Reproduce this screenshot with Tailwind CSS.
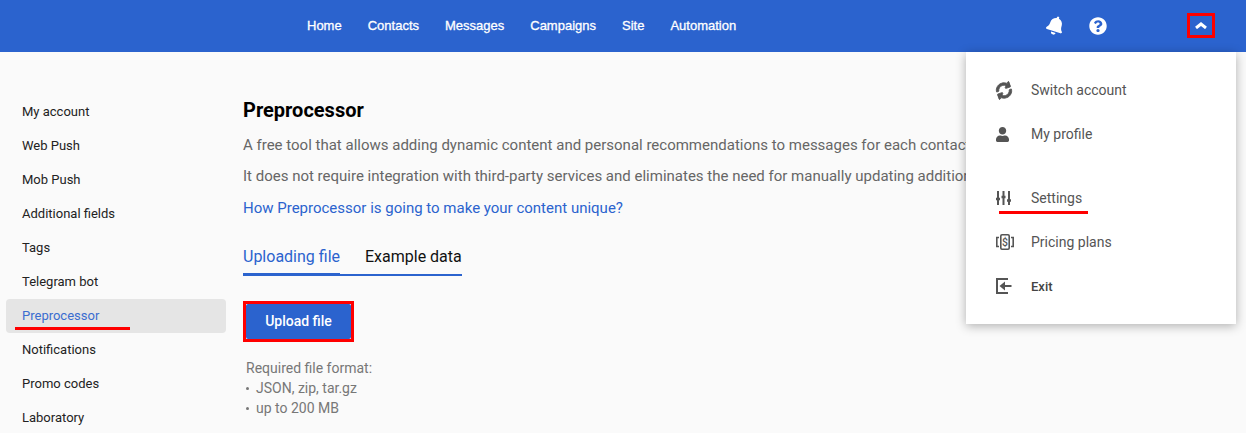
<!DOCTYPE html>
<html lang="en">
<head>
    <meta charset="UTF-8">
    <title>Preprocessor</title>
    <script src="https://cdn.jsdelivr.net/npm/@tailwindcss/browser@4"></script>
</head>
<body class="bg-[#fafafa] font-[Roboto,sans-serif] h-[433px] overflow-hidden relative">

    <header class="h-[52px] bg-[#2b63ce] flex items-center relative text-white">
        <nav class="flex gap-[26px] pl-[307px] text-[13px] font-['Liberation_Sans',sans-serif] [-webkit-text-stroke:0.3px_white] -mt-[1px]">
            <a>Home</a>
            <a>Contacts</a>
            <a>Messages</a>
            <a>Campaigns</a>
            <a>Site</a>
            <a>Automation</a>
        </nav>
        <div class="ml-auto flex items-center pr-[31px]">
            <svg class="w-[17px] h-[19px] rotate-[18deg] fill-white mr-[25px] -mt-[2px]" viewBox="0 0 448 512"><path d="M224 512c35.32 0 63.97-28.65 63.97-64H160.03c0 35.35 28.65 64 63.97 64zm215.39-149.71c-19.32-20.76-55.47-51.99-55.47-154.29 0-77.7-54.48-139.9-127.94-155.16V32c0-17.67-14.32-32-31.98-32s-31.98 14.33-31.98 32v20.84C118.56 68.1 64.08 130.3 64.08 208c0 102.3-36.15 133.53-55.47 154.29-6 6.45-8.66 14.16-8.61 21.71.11 16.4 12.98 32 32.1 32h383.8c19.12 0 32-15.6 32.1-32 .05-7.55-2.61-15.27-8.61-21.71z"/></svg>
            <svg class="w-[18px] h-[18px] fill-white mr-[80px]" viewBox="0 0 512 512"><path d="M504 256c0 136.997-111.043 248-248 248S8 392.997 8 256C8 119.083 119.043 8 256 8s248 111.083 248 248zM262.655 90c-54.497 0-89.255 22.957-116.549 63.758-3.536 5.286-2.353 12.415 2.715 16.258l34.699 26.31c5.205 3.947 12.621 3.008 16.665-2.122 17.864-22.658 30.113-35.797 57.303-35.797 20.429 0 45.698 13.148 45.698 32.958 0 14.976-12.363 22.667-32.534 33.976C247.128 238.528 216 254.941 216 296v4c0 6.627 5.373 12 12 12h56c6.627 0 12-5.373 12-12v-1.333c0-28.462 83.186-29.647 83.186-106.667 0-58.002-60.165-102-116.531-102zM256 338c-25.365 0-46 20.635-46 46 0 25.364 20.635 46 46 46s46-20.636 46-46c0-25.365-20.635-46-46-46z"/></svg>
            <div class="w-[28px] h-[25px] border-[3px] border-[#ff0000] flex items-center justify-center -mt-[1px]">
                <svg class="w-[12px] h-[7px]" viewBox="0 0 12 7" fill="none" stroke="white" stroke-width="3"><path d="M1 6l5-4L11 6"/></svg>
            </div>
        </div>
    </header>

    <div class="flex">
        <aside class="w-[243px] shrink-0 pl-[6px] pt-[43px] text-[13px] text-[#222]">
            <ul class="w-[220px]">
                <li class="h-[34px] pl-[16px] flex items-center">My account</li>
                <li class="h-[34px] pl-[16px] flex items-center">Web Push</li>
                <li class="h-[34px] pl-[16px] flex items-center">Mob Push</li>
                <li class="h-[34px] pl-[16px] flex items-center">Additional fields</li>
                <li class="h-[34px] pl-[16px] flex items-center">Tags</li>
                <li class="h-[34px] pl-[16px] flex items-center">Telegram bot</li>
                <li class="h-[34px] pl-[16px] flex items-center bg-[#e5e5e5] rounded-[4px] text-[#3a6dd0] relative">
                    Preprocessor
                    <span class="absolute left-[9px] top-[28px] w-[115px] h-[3px] bg-[#ff0000]"></span>
                </li>
                <li class="h-[34px] pl-[16px] flex items-center">Notifications</li>
                <li class="h-[34px] pl-[16px] flex items-center">Promo codes</li>
                <li class="h-[34px] pl-[16px] flex items-center">Laboratory</li>
            </ul>
        </aside>

        <main class="pt-[45px] whitespace-nowrap">
            <h1 class="text-[20px] leading-[26px] font-bold text-black">Preprocessor</h1>
            <p class="text-[15px] leading-[20px] text-[#666] mt-[12px]">A free tool that allows adding dynamic content and personal recommendations to messages for each contact</p>
            <p class="text-[15px] leading-[20px] text-[#666] mt-[11px]">It does not require integration with third-party services and eliminates the need for manually updating additional data</p>
            <p class="text-[15px] leading-[20px] text-[#2b63ce] mt-[12px]">How Preprocessor is going to make your content unique?</p>

            <div class="flex w-[219px] mt-[25px] border-b-2 border-[#2b63ce] text-[16px] h-[33px]">
                <div class="w-[97px] text-[#2b63ce] border-b-[3px] border-[#2b63ce] h-[33px] leading-[28px]">Uploading file</div>
                <div class="pl-[25px] text-[#111] leading-[28px]">Example data</div>
            </div>

            <div class="w-[111px] h-[41px] border-[3px] border-[#ff0000] mt-[25px]">
                <button class="w-full h-full bg-[#2b63ce] rounded-[2px] text-white text-[14px] font-medium">Upload file</button>
            </div>

            <div class="text-[14px] leading-[20px] text-[#777] pl-[3px] mt-[16px]">
                <div>Required file format:</div>
                <div class="flex items-center"><span class="w-[3px] h-[3px] rounded-full bg-[#777] mr-[7px]"></span>JSON, zip, tar.gz</div>
                <div class="flex items-center"><span class="w-[3px] h-[3px] rounded-full bg-[#777] mr-[7px]"></span>up to 200 MB</div>
            </div>
        </main>
    </div>

    <div class="absolute left-[966px] top-[52px] w-[270px] h-[272px] bg-white shadow-[0_2px_10px_rgba(0,0,0,0.3)] text-[14px] text-[#555] pt-[16px]">
        <div class="h-[44px] flex items-center pl-[30px]">
            <svg class="w-[16px] h-[17px] fill-[#555] stroke-[#555] stroke-[24] mr-[19px] rotate-[-20deg]" viewBox="0 0 512 512"><path d="M370.72 133.28C339.458 104.008 298.888 87.962 255.848 88c-77.458.068-144.328 53.178-162.791 126.85-1.344 5.363-6.122 9.15-11.651 9.15H24.103c-7.498 0-13.194-6.807-11.807-14.176C33.933 94.924 134.813 8 256 8c66.448 0 126.791 26.136 171.315 68.685L463.03 40.97C478.149 25.851 504 36.559 504 57.941V192c0 13.255-10.745 24-24 24H345.941c-21.382 0-32.09-25.851-16.971-40.971l41.75-41.749zM32 296h134.059c21.382 0 32.09 25.851 16.971 40.971l-41.75 41.75c31.262 29.273 71.835 45.319 114.876 45.28 77.418-.07 144.315-53.144 162.787-126.849 1.344-5.363 6.122-9.15 11.651-9.15h57.304c7.498 0 13.194 6.807 11.807 14.176C478.067 417.076 377.187 504 256 504c-66.448 0-126.791-26.136-171.315-68.685L48.97 471.03C33.851 486.149 8 475.441 8 454.059V320c0-13.255 10.745-24 24-24z"/></svg>
            <span>Switch account</span>
        </div>
        <div class="h-[44px] flex items-center pl-[30px]">
            <svg class="w-[13px] h-[15px] fill-[#555] mr-[22px]" viewBox="0 0 448 512"><path d="M224 256c70.7 0 128-57.3 128-128S294.7 0 224 0 96 57.3 96 128s57.3 128 128 128zm89.6 32h-16.7c-22.2 10.2-46.9 16-72.9 16s-50.6-5.8-72.9-16h-16.7C60.2 288 0 348.2 0 422.4V464c0 26.5 21.5 48 48 48h352c26.5 0 48-21.5 48-48v-41.6c0-74.2-60.2-134.4-134.4-134.4z"/></svg>
            <span>My profile</span>
        </div>
        <div class="h-[44px] flex items-center pl-[30px] mt-[20px] relative">
            <svg class="w-[15px] h-[14px] mr-[20px]" viewBox="0 0 15 14" fill="none" stroke="#555" stroke-width="2"><path d="M2 0v14M7.5 0v14M13 0v14"/><path d="M0 8h4M5.5 6h4M11 9.5h4" stroke-width="2.6"/></svg>
            <span>Settings</span>
            <span class="absolute left-[33px] top-[35px] w-[89px] h-[3px] bg-[#ff0000]"></span>
        </div>
        <div class="h-[44px] flex items-center pl-[30px]">
            <svg class="w-[18px] h-[16px] mr-[17px]" viewBox="0 0 18 16" fill="none" stroke="#555" stroke-width="1.6"><path d="M3 3.5H.8v9H3M15 3.5h2.2v9H15"/><rect x="4.8" y=".8" width="8.4" height="14.4" rx="1.2"/><text x="9" y="12" text-anchor="middle" font-size="10.5" font-weight="500" font-family="Roboto" fill="#555" stroke="none">$</text></svg>
            <span>Pricing plans</span>
        </div>
        <div class="h-[44px] flex items-center pl-[30px]">
            <svg class="w-[16px] h-[16px] mr-[19px]" viewBox="0 0 16 16"><path d="M0 0h12v2H2v12h10v2H0z" fill="#555"/><path d="M3.5 8L9 3.5V7h6.5v2H9v3.5z" fill="#555"/></svg>
            <span class="text-[13px] font-medium text-[#444] pt-[1px]">Exit</span>
        </div>
    </div>

</body>
</html>
